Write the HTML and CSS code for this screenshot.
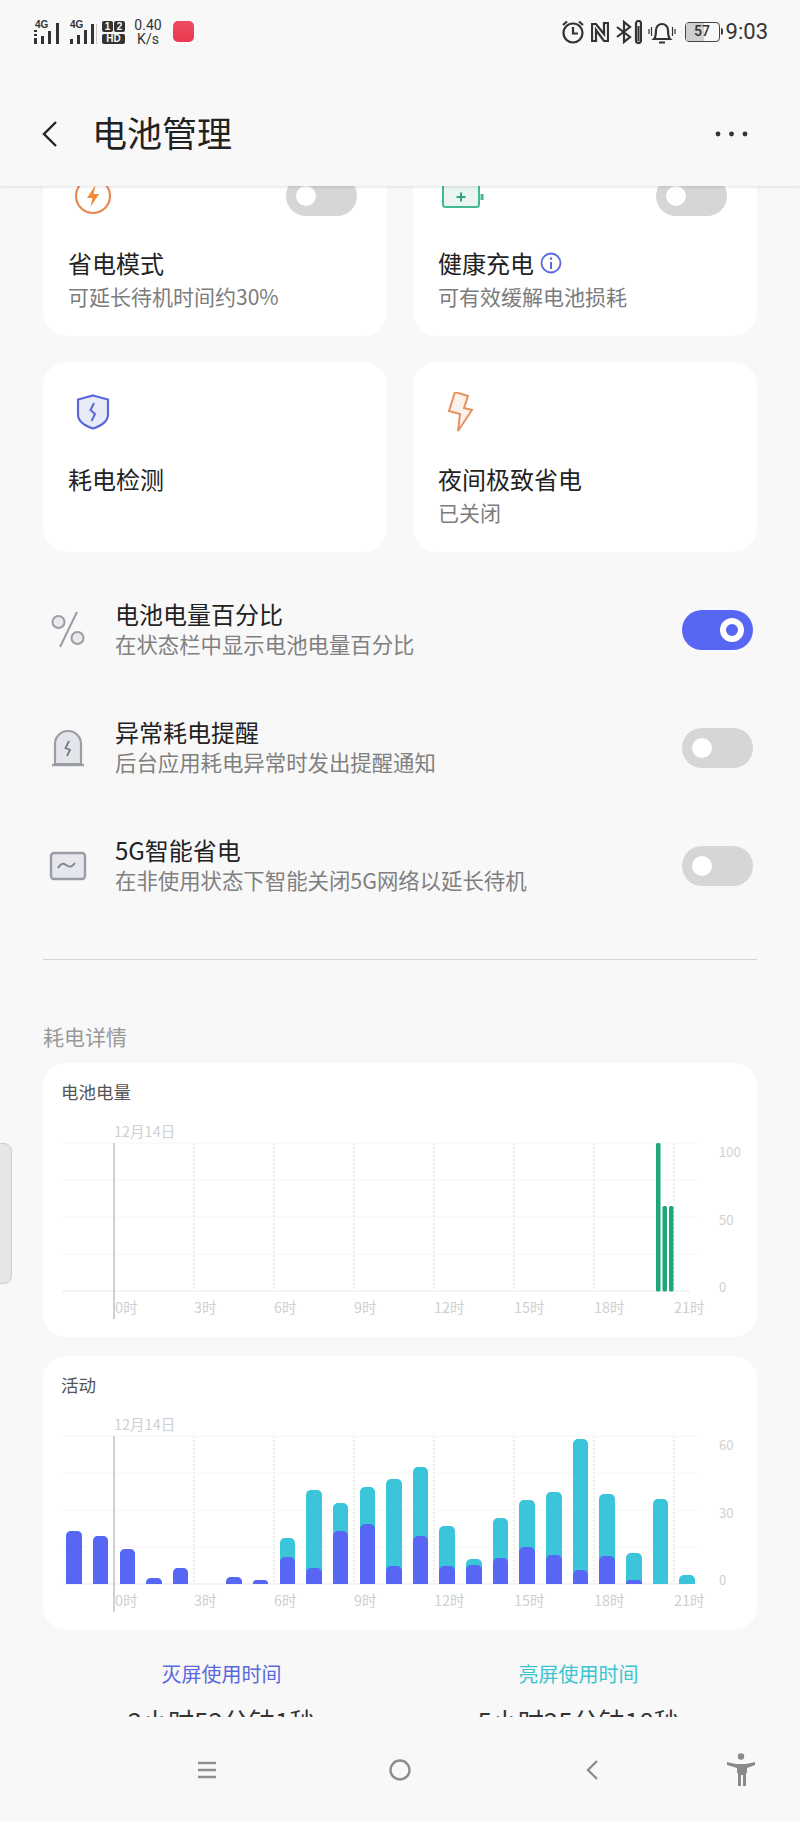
FILE: index.html
```html
<!doctype html>
<html lang="zh-CN">
  <head>
    <meta charset="UTF-8" />
    <meta name="viewport" content="width=device-width, initial-scale=1.0" />
    <title>电池管理</title>
    <link rel="stylesheet" href="styles.css">
  </head>
  <body>
    <div class="page">
      <header class="topbar">
        <div class="status">
          <div class="status-left">
            <svg class="signal" width="28" height="24" viewBox="0 0 28 24">
              <text x="1" y="8" class="signal-text">4G</text>
              <rect x="0" y="10" width="3" height="2" />
              <rect x="0" y="14" width="3" height="2" />
              <rect x="0" y="18" width="3" height="6" />
              <rect x="7" y="16" width="3" height="8" />
              <rect x="14" y="11" width="3" height="13" />
              <rect x="22" y="3" width="3" height="21" />
            </svg>
            <svg class="signal" width="28" height="24" viewBox="0 0 28 24">
              <text x="1" y="8" class="signal-text">4G</text>
              <rect x="1" y="19" width="3" height="5" />
              <rect x="8" y="15" width="3" height="9" />
              <rect x="15" y="10" width="3" height="14" />
              <rect x="22" y="4" width="3" height="20" />
              <rect x="27" y="4" width="1" height="20" fill="#c8c8c8" />
            </svg>
            <div class="sim">
              <span class="sim-top"><b>1</b><b>2</b></span>
              <span class="sim-hd">HD</span>
            </div>
            <div class="speed">0.40<br />K/s</div>
            <div class="app-dot"></div>
          </div>
          <div class="status-right">
            <svg width="24" height="24" viewBox="0 0 24 24" class="st-icon">
              <circle cx="12" cy="13" r="9.500" />
              <path d="M12 7v6.500h5M2 5l4-3.500M22 5l-4-3.500" />
            </svg>
            <svg width="18" height="20" viewBox="0 0 18 20" class="st-icon">
              <path d="M5 2H1v17h4V8l8 11h4V1h-4v11L5 2z" />
            </svg>
            <svg width="26" height="24" viewBox="0 0 26 24" class="st-icon">
              <path d="M1 7l13 10-6 5V2l6 5L1 17" />
              <rect x="20" y="1" width="5" height="22" rx="2.500" />
              <rect x="21.500" y="6" width="2" height="15" fill="#333" stroke="none" />
            </svg>
            <svg width="28" height="24" viewBox="0 0 28 24" class="st-icon">
              <path d="M6 19c2-2 2-5 2-9a6 6 0 0 1 12 0c0 4 0 7 2 9zM11 22.500h6" />
              <path d="M1 9v5M3.500 7v9M24.500 7v9M27 9v5" class="st-thin" />
            </svg>
            <div class="battery">
              <div class="battery-fill"></div>
              <span class="battery-num">57</span>
            </div>
            <span class="clock">9:03</span>
          </div>
        </div>
        <div class="toolbar">
          <svg class="back" width="16" height="28" viewBox="0 0 16 28">
            <path d="M14 2L2 14l12 12" />
          </svg>
          <h1>电池管理</h1>
          <svg class="more" width="34" height="6" viewBox="0 0 34 6">
            <circle cx="3" cy="3" r="2.400" />
            <circle cx="16.500" cy="3" r="2.400" />
            <circle cx="30" cy="3" r="2.400" />
          </svg>
        </div>
      </header>

      <main class="scroller">
        <div class="scroll-inner">
          <div class="cards">
            <div class="card">
              <div class="card-head">
                <svg width="50" height="40" viewBox="0 0 50 40" fill="none">
                  <circle cx="25" cy="20" r="17" stroke="#e58a54" stroke-width="2.200" />
                  <path d="M27.500 9l-8.500 13h5.500l-2 9 8.500-13h-5.500z" fill="#ef8a3c" />
                </svg>
                <span class="toggle"></span>
              </div>
              <div class="card-title">省电模式</div>
              <div class="card-sub">可延长待机时间约30%</div>
            </div>
            <div class="card">
              <div class="card-head">
                <svg width="50" height="40" viewBox="0 0 50 40" fill="none">
                  <rect x="5" y="8" width="36" height="23" rx="2.500" fill="#eaf5f1" stroke="#43b894" stroke-width="2" />
                  <path d="M44 18v6" stroke="#43b894" stroke-width="3" />
                  <path d="M23 16.500v9M18.500 21h9" stroke="#2ba67f" stroke-width="2" />
                </svg>
                <span class="toggle"></span>
              </div>
              <div class="card-title">健康充电
                <svg class="info" width="22" height="22" viewBox="0 0 22 22" fill="none">
                  <circle cx="11" cy="11" r="9.500" stroke="#5a68dc" stroke-width="1.800" />
                  <path d="M11 10v7" stroke="#5a68dc" stroke-width="2" />
                  <circle cx="11" cy="6.500" r="1.200" fill="#5a68dc" />
                </svg>
              </div>
              <div class="card-sub">可有效缓解电池损耗</div>
            </div>
            <div class="card">
              <div class="card-head">
                <svg width="50" height="40" viewBox="0 0 50 40" fill="none">
                  <path d="M25 3.500l15 4v15c0 7-6 11-15 14-9-3-15-7-15-14v-15z" fill="#e7eaf7" stroke="#5a68dc" stroke-width="2.200" />
                  <path d="M26 11l-3.500 7 4.500 4-3.500 7" stroke="#5a68dc" stroke-width="2" />
                </svg>
              </div>
              <div class="card-title">耗电检测</div>
            </div>
            <div class="card">
              <div class="card-head">
                <svg width="50" height="40" viewBox="0 0 50 40" fill="none">
                  <path d="M17 0l13 4-4 12 8 2-14 21 2-17-11-3z" fill="#fdf3ec" stroke="#e59160" stroke-width="2" />
                </svg>
              </div>
              <div class="card-title">夜间极致省电</div>
              <div class="card-sub">已关闭</div>
            </div>
          </div>

          <div class="rows">
            <div class="row">
              <svg class="row-icon" width="72" height="48" viewBox="0 0 72 48" fill="none">
                <circle cx="15.500" cy="16" r="6" fill="#e9eaee" stroke="#9a9da5" stroke-width="2" />
                <circle cx="34.500" cy="32" r="6" fill="#e9eaee" stroke="#9a9da5" stroke-width="2" />
                <path d="M34 6L17 41" stroke="#9a9da5" stroke-width="2" />
              </svg>
              <div class="row-text">
                <div class="row-title">电池电量百分比</div>
                <div class="row-sub">在状态栏中显示电池电量百分比</div>
              </div>
              <span class="toggle toggle-big toggle-on"></span>
            </div>
            <div class="row">
              <svg class="row-icon" width="72" height="48" viewBox="0 0 72 48" fill="none">
                <path d="M12 40V20a13 13 0 0 1 26 0v20z" fill="#e4e5ea" stroke="#9a9da5" stroke-width="2.200" />
                <path d="M9 41h32" stroke="#9a9da5" stroke-width="2.400" />
                <path d="M26 17l-3.500 7 4.500 2-3 6" stroke="#777b85" stroke-width="1.800" />
              </svg>
              <div class="row-text">
                <div class="row-title">异常耗电提醒</div>
                <div class="row-sub">后台应用耗电异常时发出提醒通知</div>
              </div>
              <span class="toggle toggle-big"></span>
            </div>
            <div class="row">
              <svg class="row-icon" width="72" height="48" viewBox="0 0 72 48" fill="none">
                <rect x="8" y="11" width="34" height="26" rx="3" fill="#e6e8ee" stroke="#9a9da5" stroke-width="2.400" />
                <path d="M15 26c3-5 5-5 8-3s5 3 9-2" stroke="#83868f" stroke-width="2" />
              </svg>
              <div class="row-text">
                <div class="row-title">5G智能省电</div>
                <div class="row-sub">在非使用状态下智能关闭5G网络以延长待机</div>
              </div>
              <span class="toggle toggle-big"></span>
            </div>
          </div>

          <hr class="divider" />

          <div class="section-label">耗电详情</div>

          <section class="chart-card">
            <div class="chart-title">电池电量</div>
            <svg class="chart-grid" width="714" height="274" viewBox="0 0 714 274">
              <path class="hline" d="M19 80H657M19 117H657M19 154H657M19 191H657" />
              <path class="base" d="M19 228H647" />
              <path class="vdot" d="M151 80V228M231 80V228M311 80V228M391 80V228M471 80V228M551 80V228M631 80V228" />
              <path class="vsolid" d="M71 80V256" />
              <text class="tick" x="71" y="74">12月14日</text>
              <text class="tick" x="72" y="250">0时</text>
              <text class="tick" x="151" y="250">3时</text>
              <text class="tick" x="231" y="250">6时</text>
              <text class="tick" x="311" y="250">9时</text>
              <text class="tick" x="391" y="250">12时</text>
              <text class="tick" x="471" y="250">15时</text>
              <text class="tick" x="551" y="250">18时</text>
              <text class="tick" x="631" y="250">21时</text>
              <text class="tick tick-y" x="676" y="94">100</text>
              <text class="tick tick-y" x="676" y="162">50</text>
              <text class="tick tick-y" x="676" y="229">0</text>
              <rect class="level" x="613" y="80" width="4.500" height="148.500" rx="1.500" />
              <rect class="level" x="619.500" y="143" width="4.500" height="85.500" rx="1.500" />
              <rect class="level" x="626" y="143" width="4.500" height="85.500" rx="1.500" />
            </svg>
          </section>

          <section class="chart-card">
            <div class="chart-title">活动</div>
            <svg class="chart-grid" width="714" height="274" viewBox="0 0 714 274">
              <path class="hline" d="M19 80H657M19 117H657M19 154H657M19 191H657" />
              <path class="base" d="M19 228H647" />
              <path class="vdot" d="M151 80V228M231 80V228M311 80V228M391 80V228M471 80V228M551 80V228M631 80V228" />
              <path class="vsolid" d="M71 80V256" />
              <text class="tick" x="71" y="74">12月14日</text>
              <text class="tick" x="72" y="250">0时</text>
              <text class="tick" x="151" y="250">3时</text>
              <text class="tick" x="231" y="250">6时</text>
              <text class="tick" x="311" y="250">9时</text>
              <text class="tick" x="391" y="250">12时</text>
              <text class="tick" x="471" y="250">15时</text>
              <text class="tick" x="551" y="250">18时</text>
              <text class="tick" x="631" y="250">21时</text>
              <text class="tick tick-y" x="676" y="94">60</text>
              <text class="tick tick-y" x="676" y="162">30</text>
              <text class="tick tick-y" x="676" y="229">0</text>
            </svg>
            <div class="bars">
              <div class="bar" style="height:52.7px"><i style="height:52.7px"></i></div>
              <div class="bar" style="height:47.7px"><i style="height:47.7px"></i></div>
              <div class="bar" style="height:35px"><i style="height:35px"></i></div>
              <div class="bar" style="height:6px"><i style="height:6px"></i></div>
              <div class="bar" style="height:16.3px"><i style="height:16.3px"></i></div>
              <div class="bar" style="height:0"></div>
              <div class="bar" style="height:7.3px"><i style="height:7.3px"></i></div>
              <div class="bar" style="height:3.7px"><i style="height:3.7px"></i></div>
              <div class="bar" style="height:45.7px"><i style="height:27px"></i></div>
              <div class="bar" style="height:94.3px"><i style="height:16.3px"></i></div>
              <div class="bar" style="height:81px"><i style="height:52.7px"></i></div>
              <div class="bar" style="height:96.7px"><i style="height:59.7px"></i></div>
              <div class="bar" style="height:105px"><i style="height:17.7px"></i></div>
              <div class="bar" style="height:117px"><i style="height:47.7px"></i></div>
              <div class="bar" style="height:57.7px"><i style="height:17.7px"></i></div>
              <div class="bar" style="height:25px"><i style="height:19px"></i></div>
              <div class="bar" style="height:66px"><i style="height:25.7px"></i></div>
              <div class="bar" style="height:84.3px"><i style="height:37px"></i></div>
              <div class="bar" style="height:92.3px"><i style="height:29px"></i></div>
              <div class="bar" style="height:145.3px"><i style="height:13.7px"></i></div>
              <div class="bar" style="height:89.7px"><i style="height:28.3px"></i></div>
              <div class="bar" style="height:31px"><i style="height:4.3px"></i></div>
              <div class="bar" style="height:85px"></div>
              <div class="bar" style="height:9.3px"></div>
            </div>
          </section>

          <div class="usage">
            <div class="usage-col">
              <div class="usage-label usage-off">灭屏使用时间</div>
              <div class="usage-value">2小时52分钟1秒</div>
            </div>
            <div class="usage-col">
              <div class="usage-label usage-on">亮屏使用时间</div>
              <div class="usage-value">5小时25分钟18秒</div>
            </div>
          </div>
        </div>
      </main>

      <nav class="navbar">
        <svg width="20" height="18" viewBox="0 0 20 18" class="nav-icon">
          <path d="M1 2h18M1 9h18M1 16h18" />
        </svg>
        <svg width="22" height="22" viewBox="0 0 22 22" class="nav-icon">
          <circle cx="11" cy="11" r="9.500" />
        </svg>
        <svg width="14" height="20" viewBox="0 0 14 20" class="nav-icon">
          <path d="M12 1L3 10l9 9" />
        </svg>
        <svg width="30" height="34" viewBox="0 0 30 34" class="nav-person">
          <circle cx="15" cy="3.500" r="3.200" />
          <path d="M1 9l9 2h10l9-2v3l-8 3v5h-1v13h-3V22h-2v11h-3V20H11v-5L1 12z" />
        </svg>
      </nav>

      <div class="side-handle"></div>
    </div>
  </body>
</html>
```

FILE: styles.css
```css
:root {
  --bg: #f8f8f9;
  --blue: #5866f4;
  --cyan: #3bc5d9;
  --tick: #d0d0d0;
}

body {
  margin: 0;
  font-family: "Noto Sans CJK SC", "Noto Sans", sans-serif;
  background: var(--bg);
  color: #222;
}

.page {
  position: relative;
  display: flex;
  flex-direction: column;
  width: 800px;
  height: 1822px;
  overflow: hidden;
}

/* top bar */
.topbar {
  position: relative;
  z-index: 2;
  flex: none;
  height: 186px;
  background: var(--bg);
  box-shadow: 0 1px 3px rgba(0, 0, 0, 0.12);
}

.status {
  display: flex;
  justify-content: space-between;
  align-items: center;
  height: 64px;
  padding: 0 32px 0 34px;
}

.status-left,
.status-right {
  display: flex;
  align-items: center;
}

.signal {
  margin-right: 7px;
  fill: #333;
}

.signal-text {
  font-family: "Liberation Sans", sans-serif;
  font-size: 10px;
  font-weight: 700;
}

.sim {
  display: flex;
  flex-direction: column;
  gap: 2px;
  width: 23px;
  margin: 0 7px 0 -2px;
}

.sim-top {
  display: flex;
  gap: 1px;
}

.sim-top b {
  flex: 1;
  height: 11px;
  border-radius: 2px;
  background: #333;
  color: #f8f8f8;
  font: 700 10px/11px "Liberation Sans", sans-serif;
  text-align: center;
}

.sim-hd {
  height: 10px;
  border-radius: 2px;
  background: #333;
  color: #f8f8f8;
  font: 700 10px/10px "Liberation Sans", sans-serif;
  text-align: center;
}

.speed {
  width: 32px;
  margin-right: 9px;
  font: 14px/14px Roboto, sans-serif;
  color: #333;
  text-align: center;
}

.app-dot {
  width: 21px;
  height: 21px;
  margin-top: -2px;
  border-radius: 5px;
  background: linear-gradient(#ef4c60, #e8394f);
}

.st-icon {
  margin-right: 6.500px;
  fill: none;
  stroke: #333;
  stroke-width: 2.200;
}

.st-thin {
  stroke-width: 1.200;
}

.battery {
  position: relative;
  flex: none;
  width: 35px;
  height: 20px;
  margin: 0 6px 0 2px;
  box-sizing: border-box;
  border: 1.500px solid #444;
  border-radius: 4px;
}

.battery::after {
  content: "";
  position: absolute;
  top: 5px;
  right: -4px;
  width: 2px;
  height: 7px;
  border-radius: 0 2px 2px 0;
  background: #444;
}

.battery-fill {
  width: 57%;
  height: 100%;
  border-radius: 2px 0 0 2px;
  background: #cfcfcf;
}

.battery-num {
  position: absolute;
  inset: 0;
  font: 500 14px/17px Roboto, sans-serif;
  color: #333;
  text-align: center;
}

.clock {
  font: 22px/24px Roboto, sans-serif;
  color: #333;
}

.toolbar {
  display: flex;
  align-items: center;
  box-sizing: border-box;
  height: 122px;
  padding: 18px 51px 0 42px;
}

.back {
  fill: none;
  stroke: #222;
  stroke-width: 2.400;
}

h1 {
  margin: -4px 0 0 34px;
  font-size: 35px;
  font-weight: 400;
  line-height: 48px;
}

.more {
  margin-left: auto;
  fill: #333;
}

/* scrolled content */
.scroller {
  flex: none;
  height: 1531px;
  overflow: hidden;
}

.scroll-inner {
  margin-top: -40px;
  padding: 0 43px;
}

.cards {
  display: grid;
  grid-template-columns: 344px 344px;
  gap: 26px;
}

.card {
  box-sizing: border-box;
  height: 190px;
  padding: 30px 30px 0 25px;
  border-radius: 24px;
  background: #fff;
}

.card-head {
  display: flex;
  justify-content: space-between;
  align-items: center;
  height: 40px;
  margin-bottom: 30px;
}

.card-title {
  display: flex;
  align-items: center;
  height: 34px;
  font-size: 24px;
  line-height: 34px;
}

.info {
  margin-left: 6px;
}

.card-sub {
  height: 32px;
  font-size: 21px;
  line-height: 32px;
  color: #7c7c7c;
}

.toggle {
  position: relative;
  display: block;
  flex: none;
  width: 71px;
  height: 40px;
  border-radius: 20px;
  background: #d6d6d6;
}

.toggle::after {
  content: "";
  position: absolute;
  top: 10px;
  left: 10px;
  width: 20px;
  height: 20px;
  border-radius: 50%;
  background: #fff;
}

.toggle-on {
  background: var(--blue);
}

.toggle-on::after {
  top: 8px;
  left: 38px;
  width: 12px;
  height: 12px;
  border: 6px solid #fff;
  background: var(--blue);
}

.rows {
  margin-top: 19px;
}

.row {
  display: flex;
  align-items: center;
  height: 118px;
  padding-right: 4px;
}

.row-icon {
  flex: none;
}

.row-text {
  flex: 1;
  margin-top: -2px;
}

.row-title {
  font-size: 24px;
  line-height: 30px;
}

.row-sub {
  font-size: 21.400px;
  line-height: 30px;
  color: #808080;
}

.divider {
  height: 1px;
  margin: 34px 0 0;
  border: 0;
  background: #d4d4d4;
}

.section-label {
  margin: 61px 0 12px;
  font-size: 21px;
  line-height: 30px;
  color: #999;
}

/* charts */
.chart-card {
  position: relative;
  height: 274px;
  margin-bottom: 19px;
  border-radius: 24px;
  background: #fff;
}

.chart-title {
  padding: 16px 0 0 18px;
  font-size: 17.500px;
  line-height: 26px;
  color: #555;
}

.chart-grid {
  position: absolute;
  top: 0;
  left: 0;
  fill: none;
}

.hline {
  stroke: #f6f6f6;
  stroke-width: 1;
}

.base {
  stroke: #f0f0f0;
  stroke-width: 1.500;
}

.vdot {
  stroke: #e9e9e9;
  stroke-width: 1.500;
  stroke-dasharray: 2 2;
}

.vsolid {
  stroke: #d0d0d0;
  stroke-width: 2;
}

.tick {
  font-size: 14.500px;
  fill: var(--tick);
}

.tick-y {
  font-size: 13px;
}

.level {
  fill: #1fa67a;
}

.bars {
  position: absolute;
  left: 23.300px;
  bottom: 46px;
  display: flex;
  align-items: flex-end;
  gap: 11.170px;
}

.bar {
  display: flex;
  align-items: flex-end;
  width: 15.500px;
  border-radius: 5px 5px 0 0;
  background: var(--cyan);
}

.bar i {
  display: block;
  width: 100%;
  border-radius: 5px 5px 0 0;
  background: var(--blue);
}

.usage {
  display: grid;
  grid-template-columns: 1fr 1fr;
  margin-top: 29px;
  text-align: center;
}

.usage-label {
  font-size: 20px;
  line-height: 30px;
}

.usage-off {
  color: #5a68dc;
}

.usage-on {
  color: #3bc5d0;
}

.usage-value {
  margin-top: 14px;
  font-size: 26px;
  line-height: 36px;
  color: #333;
}

/* bottom nav */
.navbar {
  display: grid;
  grid-template-columns: 193px 193px 192px 106px;
  justify-items: center;
  align-items: center;
  flex: none;
  height: 105px;
  padding-left: 110px;
  background: var(--bg);
}

.nav-icon {
  fill: none;
  stroke: #8e8e8e;
  stroke-width: 2.400;
}

.nav-person {
  fill: #8a8a8a;
}

.side-handle {
  position: absolute;
  top: 1143px;
  left: -2px;
  box-sizing: border-box;
  width: 14px;
  height: 141px;
  border: 1.500px solid #cfcfcf;
  border-radius: 0 8px 8px 0;
  background: #e6e6e6;
}
```
